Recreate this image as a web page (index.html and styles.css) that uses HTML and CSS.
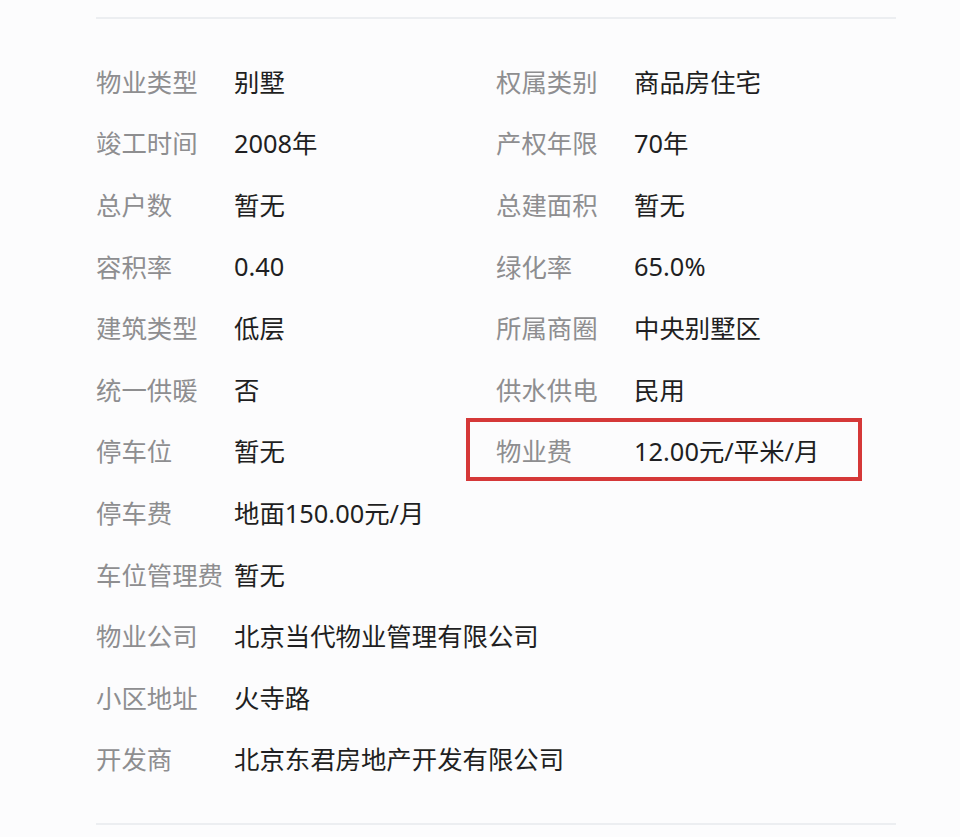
FILE: index.html
```html
<!DOCTYPE html>
<html lang="zh-CN">
<head>
    <meta charset="UTF-8">
    <meta name="viewport" content="width=device-width, initial-scale=1.0">
    <title>小区信息</title>
    <link rel="stylesheet" href="styles.css">
</head>
<body>
    <div class="panel">
        <div class="info-grid">
            <div class="item"><span class="label">物业类型</span><span class="value">别墅</span></div>
            <div class="item"><span class="label">权属类别</span><span class="value">商品房住宅</span></div>

            <div class="item"><span class="label">竣工时间</span><span class="value">2008年</span></div>
            <div class="item"><span class="label">产权年限</span><span class="value">70年</span></div>

            <div class="item"><span class="label">总户数</span><span class="value">暂无</span></div>
            <div class="item"><span class="label">总建面积</span><span class="value">暂无</span></div>

            <div class="item"><span class="label">容积率</span><span class="value">0.40</span></div>
            <div class="item"><span class="label">绿化率</span><span class="value">65.0%</span></div>

            <div class="item"><span class="label">建筑类型</span><span class="value">低层</span></div>
            <div class="item"><span class="label">所属商圈</span><span class="value">中央别墅区</span></div>

            <div class="item"><span class="label">统一供暖</span><span class="value">否</span></div>
            <div class="item"><span class="label">供水供电</span><span class="value">民用</span></div>

            <div class="item"><span class="label">停车位</span><span class="value">暂无</span></div>
            <div class="item marked"><span class="label">物业费</span><span class="value">12.00元/平米/月</span></div>

            <div class="item solo"><span class="label">停车费</span><span class="value">地面150.00元/月</span></div>
            <div class="item solo"><span class="label">车位管理费</span><span class="value">暂无</span></div>
            <div class="item solo"><span class="label">物业公司</span><span class="value">北京当代物业管理有限公司</span></div>
            <div class="item solo"><span class="label">小区地址</span><span class="value">火寺路</span></div>
            <div class="item solo"><span class="label">开发商</span><span class="value">北京东君房地产开发有限公司</span></div>
        </div>
    </div>
</body>
</html>
```

FILE: styles.css
```css
* {
    margin: 0;
    padding: 0;
    box-sizing: border-box;
}

body {
    background: #fcfcfd;
    font-family: "Noto Sans", "Noto Sans CJK SC", sans-serif;
    font-size: 25.4px;
}

.panel {
    width: 800px;
    margin-left: 96px;
    margin-top: 17px;
    padding: 31px 0 34px;
    border-top: 2px solid #eceef1;
    border-bottom: 2px solid #eceef1;
}

.info-grid {
    display: grid;
    grid-template-columns: 400px 400px;
    grid-auto-rows: 61.6px;
}

.item {
    display: flex;
    align-items: center;
    position: relative;
}

.item.solo {
    grid-column: 1;
}

.label {
    width: 138px;
    flex-shrink: 0;
    color: #8e8e90;
    white-space: nowrap;
}

.value {
    color: #1f1f22;
    white-space: nowrap;
}

/* red annotation box */
.item.marked::after {
    content: "";
    position: absolute;
    left: -30px;
    right: 34px;
    top: -2px;
    bottom: 0;
    border: 4px solid #d53838;
}
```
